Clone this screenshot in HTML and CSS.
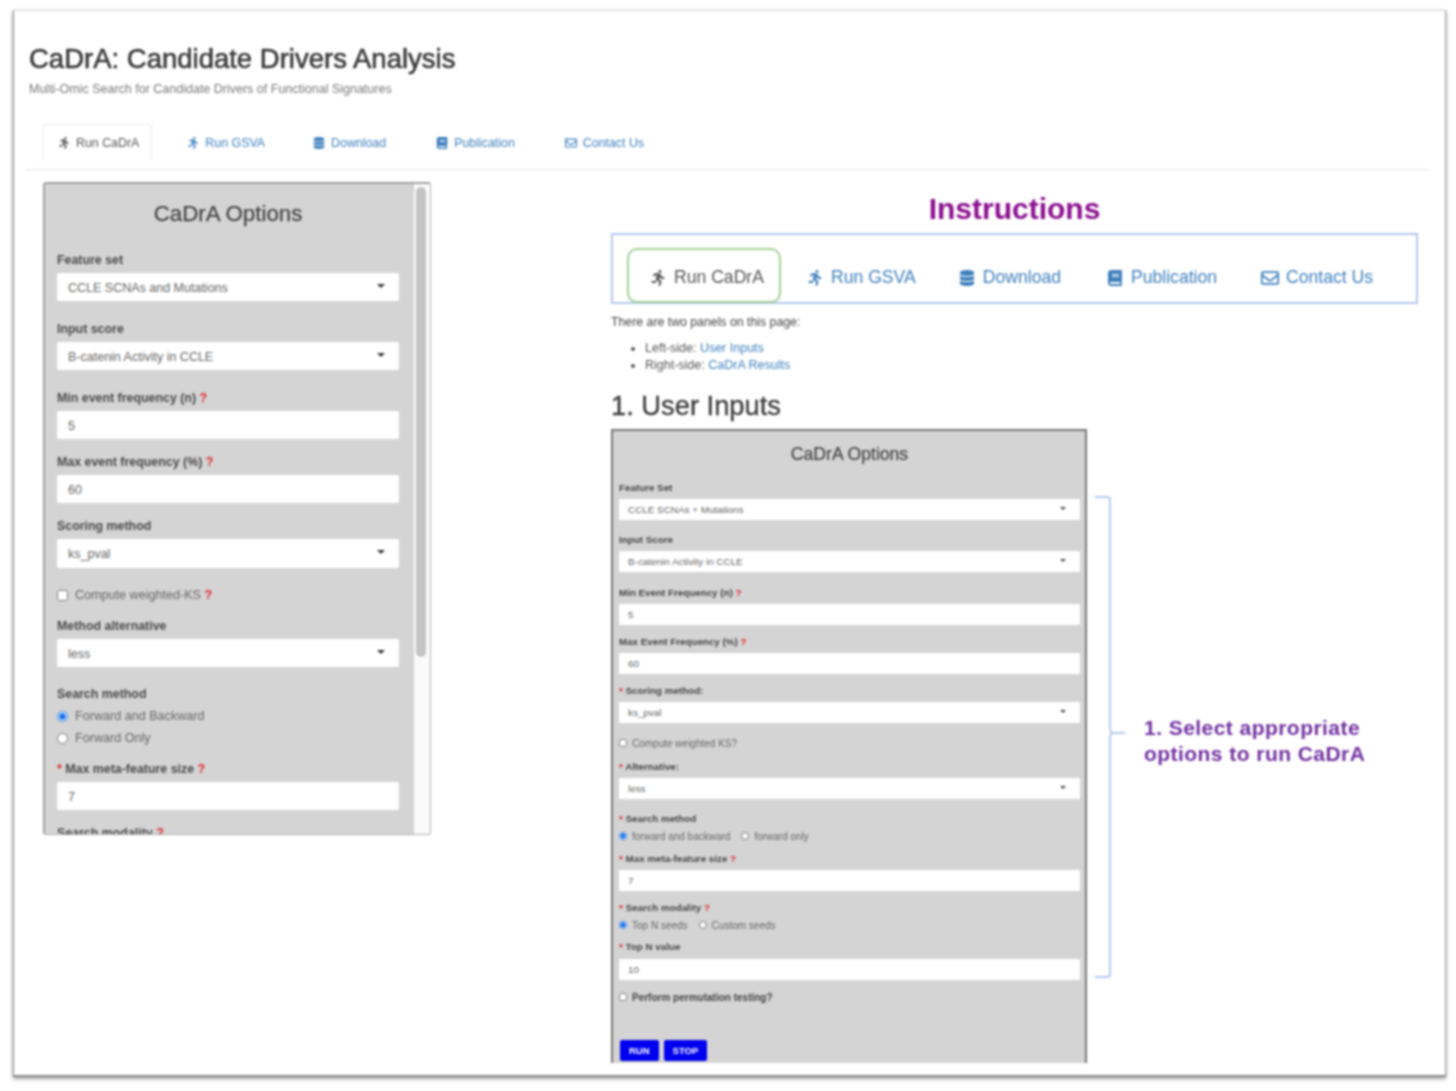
FILE: index.html
```html
<!DOCTYPE html>
<html lang="en">
<head>
<meta charset="utf-8">
<title>CaDrA: Candidate Drivers Analysis</title>
<link rel="stylesheet" href="styles.css">
</head>
<body>
<svg class="defs" width="0" height="0" aria-hidden="true">
  <symbol id="i-run" viewBox="0 0 416 512"><path d="M272 96c26.51 0 48-21.49 48-48S298.51 0 272 0s-48 21.49-48 48 21.49 48 48 48zM113.69 317.47l-14.8 34.52H32c-17.67 0-32 14.33-32 32s14.33 32 32 32h77.45c19.25 0 36.58-11.44 44.11-29.09l8.79-20.52-10.67-6.3c-17.32-10.23-30.06-25.37-37.99-42.61zM384 223.99h-44.03l-26.06-53.25c-12.5-25.55-35.45-44.23-61.78-50.94l-71.08-21.14c-28.3-6.8-57.77-.55-80.84 17.14l-39.67 30.41c-14.03 10.75-16.69 30.83-5.92 44.86s30.84 16.66 44.86 5.92l39.69-30.41c7.67-5.89 17.44-8 25.27-6.14l14.7 4.37-37.46 87.39c-12.62 29.48-1.31 64.01 26.3 80.31l84.98 50.17-27.47 87.73c-5.28 16.86 4.11 34.81 20.97 40.09 3.19 1 6.41 1.48 9.59 1.48 13.61 0 26.23-8.77 30.52-22.45l31.64-101.06c5.91-20.77-2.89-43.08-21.64-54.39l-61.24-36.14 31.31-78.28 20.27 41.43c8 16.34 24.92 26.89 43.11 26.89H384c17.67 0 32-14.33 32-32s-14.33-31.99-32-31.99z"/></symbol>
  <symbol id="i-db" viewBox="0 0 448 512"><path d="M448 73.143v45.714C448 159.143 347.667 192 224 192S0 159.143 0 118.857V73.143C0 32.857 100.333 0 224 0s224 32.857 224 73.143zM448 176v102.857C448 319.143 347.667 352 224 352S0 319.143 0 278.857V176c48.125 33.143 136.208 48.572 224 48.572S399.874 209.143 448 176zm0 160v102.857C448 479.143 347.667 512 224 512S0 479.143 0 438.857V336c48.125 33.143 136.208 48.572 224 48.572S399.874 369.143 448 336z"/></symbol>
  <symbol id="i-book" viewBox="0 0 448 512"><path d="M448 360V24c0-13.3-10.7-24-24-24H96C43 0 0 43 0 96v320c0 53 43 96 96 96h328c13.3 0 24-10.7 24-24v-16c0-7.5-3.5-14.3-8.9-18.7-4.2-15.4-4.2-59.3 0-74.7 5.4-4.3 8.9-11.1 8.9-18.6zM128 134c0-3.3 2.7-6 6-6h212c3.3 0 6 2.7 6 6v20c0 3.3-2.7 6-6 6H134c-3.3 0-6-2.7-6-6v-20zm0 64c0-3.3 2.7-6 6-6h212c3.3 0 6 2.7 6 6v20c0 3.3-2.7 6-6 6H134c-3.3 0-6-2.7-6-6v-20zm253.4 250H96c-17.7 0-32-14.3-32-32 0-17.6 14.4-32 32-32h285.4c-1.9 17.1-1.9 46.9 0 64z"/></symbol>
  <symbol id="i-mail" viewBox="0 0 512 512"><path d="M464 64H48C21.49 64 0 85.49 0 112v288c0 26.51 21.49 48 48 48h416c26.51 0 48-21.49 48-48V112c0-26.51-21.49-48-48-48zm0 48v40.805c-22.422 18.259-58.168 46.651-134.587 106.49-16.841 13.247-50.201 45.072-73.413 44.701-23.208.375-56.579-31.459-73.413-44.701C106.18 199.465 70.425 171.067 48 152.805V112h416zM48 400V214.398c22.914 18.251 55.409 43.862 104.938 82.646 21.857 17.205 60.134 55.186 103.062 54.955 42.717.231 80.509-37.199 103.053-54.947 49.528-38.783 82.032-64.401 104.947-82.653V400H48z"/></symbol>
</svg>

<div class="frame">
  <h1 class="title">CaDrA: Candidate Drivers Analysis</h1>
  <p class="subtitle">Multi-Omic Search for Candidate Drivers of Functional Signatures</p>

  <nav class="tabs">
    <a class="tab tab-active"><svg class="ic"><use href="#i-run"/></svg>Run CaDrA</a>
    <a class="tab"><svg class="ic"><use href="#i-run"/></svg>Run GSVA</a>
    <a class="tab tab-wide"><svg class="ic"><use href="#i-db"/></svg>Download</a>
    <a class="tab tab-wide"><svg class="ic"><use href="#i-book"/></svg>Publication</a>
    <a class="tab"><svg class="ic"><use href="#i-mail"/></svg>Contact Us</a>
  </nav>

  <div class="main">
    <aside class="side">
      <div class="side-body">
        <h3 class="side-title">CaDrA Options</h3>
        <div class="fg fg-sel"><div class="lab">Feature set</div><div class="ctl">CCLE SCNAs and Mutations<i class="caret"></i></div></div>
        <div class="fg fg-sel"><div class="lab">Input score</div><div class="ctl">B-catenin Activity in CCLE<i class="caret"></i></div></div>
        <div class="fg"><div class="lab">Min event frequency (n) <b class="q">?</b></div><div class="ctl">5</div></div>
        <div class="fg"><div class="lab">Max event frequency (%) <b class="q">?</b></div><div class="ctl">60</div></div>
        <div class="fg fg-score"><div class="lab">Scoring method</div><div class="ctl">ks_pval<i class="caret"></i></div></div>
        <label class="opt opt-check"><input type="checkbox"><span>Compute weighted-KS <b class="q">?</b></span></label>
        <div class="fg fg-alt"><div class="lab">Method alternative</div><div class="ctl">less<i class="caret"></i></div></div>
        <div class="fg-radio">
          <div class="lab">Search method</div>
          <label class="opt"><input type="radio" name="sm" checked>Forward and Backward</label>
          <label class="opt"><input type="radio" name="sm">Forward Only</label>
        </div>
        <div class="fg"><div class="lab"><b class="q">*</b> Max meta-feature size <b class="q">?</b></div><div class="ctl">7</div></div>
        <div class="fg"><div class="lab">Search modality <b class="q">?</b></div></div>
      </div>
      <div class="scroll"><div class="thumb"></div></div>
    </aside>

    <section class="help">
      <h2 class="help-title">Instructions</h2>
      <div class="bigtabs">
        <a class="bigtab bigtab-active"><svg class="bic"><use href="#i-run"/></svg>Run CaDrA</a>
        <a class="bigtab bigtab-gsva"><svg class="bic"><use href="#i-run"/></svg>Run GSVA</a>
        <a class="bigtab"><svg class="bic"><use href="#i-db"/></svg>Download</a>
        <a class="bigtab bigtab-pub"><svg class="bic"><use href="#i-book"/></svg>Publication</a>
        <a class="bigtab"><svg class="bic bic-mail"><use href="#i-mail"/></svg>Contact Us</a>
      </div>
      <p class="intro">There are two panels on this page:</p>
      <ul class="list">
        <li>Left-side: <a>User Inputs</a></li>
        <li>Right-side: <a>CaDrA Results</a></li>
      </ul>
      <h2 class="h-step">1. User Inputs</h2>

      <div class="step">
        <div class="mini">
          <h4 class="mini-title">CaDrA Options</h4>
          <div class="mg mg-a"><div class="mlab">Feature Set</div><div class="mctl">CCLE SCNAs + Mutations<i class="mcaret"></i></div></div>
          <div class="mg mg-a2"><div class="mlab">Input Score</div><div class="mctl">B-catenin Activity in CCLE<i class="mcaret"></i></div></div>
          <div class="mg"><div class="mlab">Min Event Frequency (n) <b class="q">?</b></div><div class="mctl">5</div></div>
          <div class="mg"><div class="mlab">Max Event Frequency (%) <b class="q">?</b></div><div class="mctl">60</div></div>
          <div class="mg mg-b"><div class="mlab"><b class="q">*</b> Scoring method:</div><div class="mctl">ks_pval<i class="mcaret"></i></div></div>
          <label class="mopt mopt-check"><input type="checkbox">Compute weighted KS?</label>
          <div class="mg mg-c"><div class="mlab"><b class="q">*</b> Alternative:</div><div class="mctl">less<i class="mcaret"></i></div></div>
          <div class="mg-r">
            <div class="mlab"><b class="q">*</b> Search method</div>
            <div class="mopts"><label class="mopt"><input type="radio" name="m1" checked>forward and backward</label><label class="mopt"><input type="radio" name="m1">forward only</label></div>
          </div>
          <div class="mg"><div class="mlab"><b class="q">*</b> Max meta-feature size <b class="q">?</b></div><div class="mctl">7</div></div>
          <div class="mg-r mg-r2">
            <div class="mlab"><b class="q">*</b> Search modality <b class="q">?</b></div>
            <div class="mopts"><label class="mopt"><input type="radio" name="m2" checked>Top N seeds</label><label class="mopt"><input type="radio" name="m2">Custom seeds</label></div>
          </div>
          <div class="mg mg-top"><div class="mlab"><b class="q">*</b> Top N value</div><div class="mctl">10</div></div>
          <label class="mopt mopt-perm"><input type="checkbox">Perform permutation testing?</label>
          <div class="btns"><button class="btn">RUN</button><button class="btn">STOP</button></div>
        </div>

        <svg class="brace" width="31" height="485" viewBox="0 0 31 485" aria-hidden="true">
          <path d="M1 2h12q3 0 3 3v227q0 6 3 6h12M19 238q-3 0-3 6v235q0 3-3 3H1" fill="none" stroke="#b4c9ec" stroke-width="2"/>
        </svg>
        <p class="callout">1. Select appropriate<br>options to run CaDrA</p>
      </div>
    </section>
  </div>
</div>
</body>
</html>
```

FILE: styles.css
```css
* { box-sizing: border-box; }

html, body { margin: 0; background: #fff; }

body {
  width: 1456px;
  height: 1091px;
  overflow: hidden;
  font-family: "Liberation Sans", Arial, sans-serif;
  color: #333;
}

.defs { position: absolute; }

a { color: #3f80bd; text-decoration: none; }

.frame {
  width: 1433px;
  height: 1067px;
  margin: 10px 0 0 13px;
  padding: 33px 14px 0 15px;
  background: #fff;
  border-left: 1px solid #8a8a8a;
  border-right: 1px solid #a0a0a0;
  border-top: 1px solid #e2e2e2;
  border-bottom: 2px solid #8c8c8c;
  box-shadow: 0 2px 4px rgba(0, 0, 0, .35), 0 0 2px rgba(0, 0, 0, .15);
  overflow: hidden;
  filter: blur(.85px);
}

.title {
  margin: 0;
  font-size: 27.5px;
  line-height: 30px;
  font-weight: 400;
  color: #3a3a3a;
  -webkit-text-stroke: .6px #3a3a3a;
}

.subtitle {
  margin: 8px 0 0;
  font-size: 12.5px;
  line-height: 14px;
  color: #777;
}

/* top tabs */
.tabs {
  display: flex;
  gap: 18px;
  margin: 28px 0 0 -3px;
  padding: 0 0 9px 17px;
  border-bottom: 1px solid #e8e8e8;
}

.tab {
  display: flex;
  align-items: center;
  height: 36px;
  padding: 1px 15px 0;
  font-size: 12.4px;
  color: #3f80bd;
}

.tab-wide { margin-right: 2px; }

.tab-active {
  margin-right: 2px;
  padding: 0 12px 0 14px;
  color: #555;
  border: 1px solid #ececec;
  border-bottom: 0;
  border-radius: 3px 3px 0 0;
}

.ic {
  width: 12px;
  height: 12px;
  margin-right: 6px;
  fill: currentColor;
}

/* main row */
.main {
  display: flex;
  gap: 180px;
  margin: 12px 0 0 14px;
}

/* left panel */
.side {
  display: flex;
  flex: none;
  width: 388px;
  height: 653px;
  border: 1px solid #b0b0b0;
  border-top: 2px solid #a0a0a0;
  border-left: 2px solid #a0a0a0;
  border-radius: 3px;
  overflow: hidden;
}

.side-body {
  flex: 1;
  padding: 0 15px 0 12px;
  background: #d4d4d4;
  overflow: hidden;
}

.side-title {
  margin: 0;
  padding-top: 17px;
  height: 68px;
  font-size: 22.3px;
  line-height: 26px;
  font-weight: 400;
  text-align: center;
  color: #444;
  -webkit-text-stroke: .25px #444;
}

.scroll {
  flex: none;
  width: 16px;
  padding: 3px 4px 0 2px;
  background: #fafafa;
}

.thumb { height: 470px; background: #c4c4c4; border-radius: 5px; }

.lab {
  padding-top: 1px;
  font-size: 12.4px;
  line-height: 14px;
  font-weight: 700;
  color: #4a4a4a;
}

.q { color: #e0242a; font-weight: 700; }

.fg { margin-bottom: 15px; }
.fg-sel { margin-bottom: 20px; }
.fg-alt { margin-bottom: 19px; }
.fg-score { margin-bottom: 19px; }

.ctl {
  position: relative;
  height: 28px;
  margin-top: 6px;
  padding-left: 11px;
  background: #fff;
  border-radius: 2px;
  font-size: 12.5px;
  line-height: 30px;
  color: #666;
}

.fg-score .ctl { height: 29px; }

.caret {
  position: absolute;
  top: 11px;
  right: 14px;
  border: 4.5px solid transparent;
  border-top: 4.5px solid #333;
  border-bottom: 0;
}

.opt {
  display: flex;
  align-items: center;
  height: 22px;
  padding-top: 2px;
  font-size: 12.6px;
  color: #666;
}

.opt input {
  width: 11px;
  height: 11px;
  margin: 0 7px 0 0;
  accent-color: #1a73e8;
}

.opt-check { margin: -4px 0 13px; }

.fg-radio { margin-bottom: 13px; }
.fg-radio .lab { margin-bottom: 3px; }

/* right column */
.help { flex: none; width: 807px; padding-top: 9px; }

.help-title {
  margin: 0;
  font-size: 30px;
  line-height: 36px;
  font-weight: 700;
  text-align: center;
  color: #8b0f8f;
}

.bigtabs {
  display: flex;
  height: 71px;
  margin-top: 6px;
  padding: 13px 0 0 14px;
  border: 2px solid #b3c6ea;
}

.bigtab {
  display: flex;
  flex: none;
  align-items: center;
  height: 55px;
  padding-top: 4px;
  font-size: 17.6px;
  margin-right: 46px;
  white-space: nowrap;
}

.bigtab-gsva { margin-right: 43px; }
.bigtab-pub { margin-right: 44px; }

.bigtab-active {
  width: 154px;
  margin-right: 26px;
  padding-left: 21px;
  color: #555;
  border: 2px solid #a3cf93;
  border-radius: 10px;
}

.bic {
  width: 16px;
  height: 16px;
  margin-right: 8px;
  fill: currentColor;
}

.bic-mail { width: 18px; height: 18px; margin-right: 7px; }

.intro {
  margin: 11px 0 0;
  font-size: 12.3px;
  line-height: 14px;
  color: #444;
}

.list {
  margin: 11px 0 0;
  padding-left: 34px;
  font-size: 12.5px;
  line-height: 17px;
  color: #555;
}

.h-step {
  margin: 16px 0 0;
  font-size: 27.3px;
  line-height: 32px;
  font-weight: 400;
  color: #3a3a3a;
  -webkit-text-stroke: .3px #3a3a3a;
}

.step {
  display: flex;
  align-items: flex-start;
  height: 634px;
  margin-top: 7px;
}

/* miniature options panel */
.mini {
  flex: none;
  width: 476px;
  height: 634px;
  padding: 0 5px 0 6px;
  background: #d4d4d4;
  border: 2px solid #777;
  border-bottom: 0;
  overflow: hidden;
}

.mini-title {
  margin: 0;
  height: 51px;
  padding-top: 13px;
  font-size: 17.6px;
  line-height: 20px;
  font-weight: 400;
  text-align: center;
  color: #444;
  -webkit-text-stroke: .2px #444;
}

.mlab {
  font-size: 9.8px;
  line-height: 12px;
  font-weight: 700;
  color: #444;
}

.mg { margin-bottom: 11px; }
.mg-a { margin-bottom: 14px; }
.mg-a2 { margin-bottom: 15px; }
.mg-b { margin-bottom: 13px; }
.mg-c { margin-bottom: 14px; }
.mg-top .mctl { margin-top: 6px; }

.mctl {
  position: relative;
  height: 21px;
  margin-top: 5px;
  padding-left: 9px;
  background: #fff;
  font-size: 9.9px;
  line-height: 21px;
  color: #666;
}

.mcaret {
  position: absolute;
  top: 8px;
  right: 14px;
  border: 3px solid transparent;
  border-top: 3px solid #444;
  border-bottom: 0;
}

.mopts { display: flex; gap: 11px; margin-top: 4px; }

.mopt {
  display: flex;
  align-items: center;
  height: 14px;
  font-size: 10px;
  color: #666;
}

.mopt input {
  width: 8px;
  height: 8px;
  margin: 0 5px 0 0;
  accent-color: #1a73e8;
}

.mopt-check { margin-bottom: 11px; }

.mg-r { margin-bottom: 10px; }
.mg-r2 { margin-bottom: 9px; }

.mopt-perm {
  margin-top: -1px;
  font-weight: 700;
  color: #444;
}

.btns { display: flex; gap: 5px; margin: 36px 0 0 1px; }

.btn {
  height: 21px;
  padding: 0 9px;
  border: 0;
  border-radius: 2px;
  background: #0000f0;
  color: #fff;
  font: 700 9.5px/21px "Liberation Sans", Arial, sans-serif;
}

.brace { flex: none; margin: 66px 0 0 7px; }

.callout {
  margin: 286px 0 0 19px;
  font-size: 21px;
  line-height: 26px;
  font-weight: 700;
  letter-spacing: .45px;
  color: #7030a0;
}
```
